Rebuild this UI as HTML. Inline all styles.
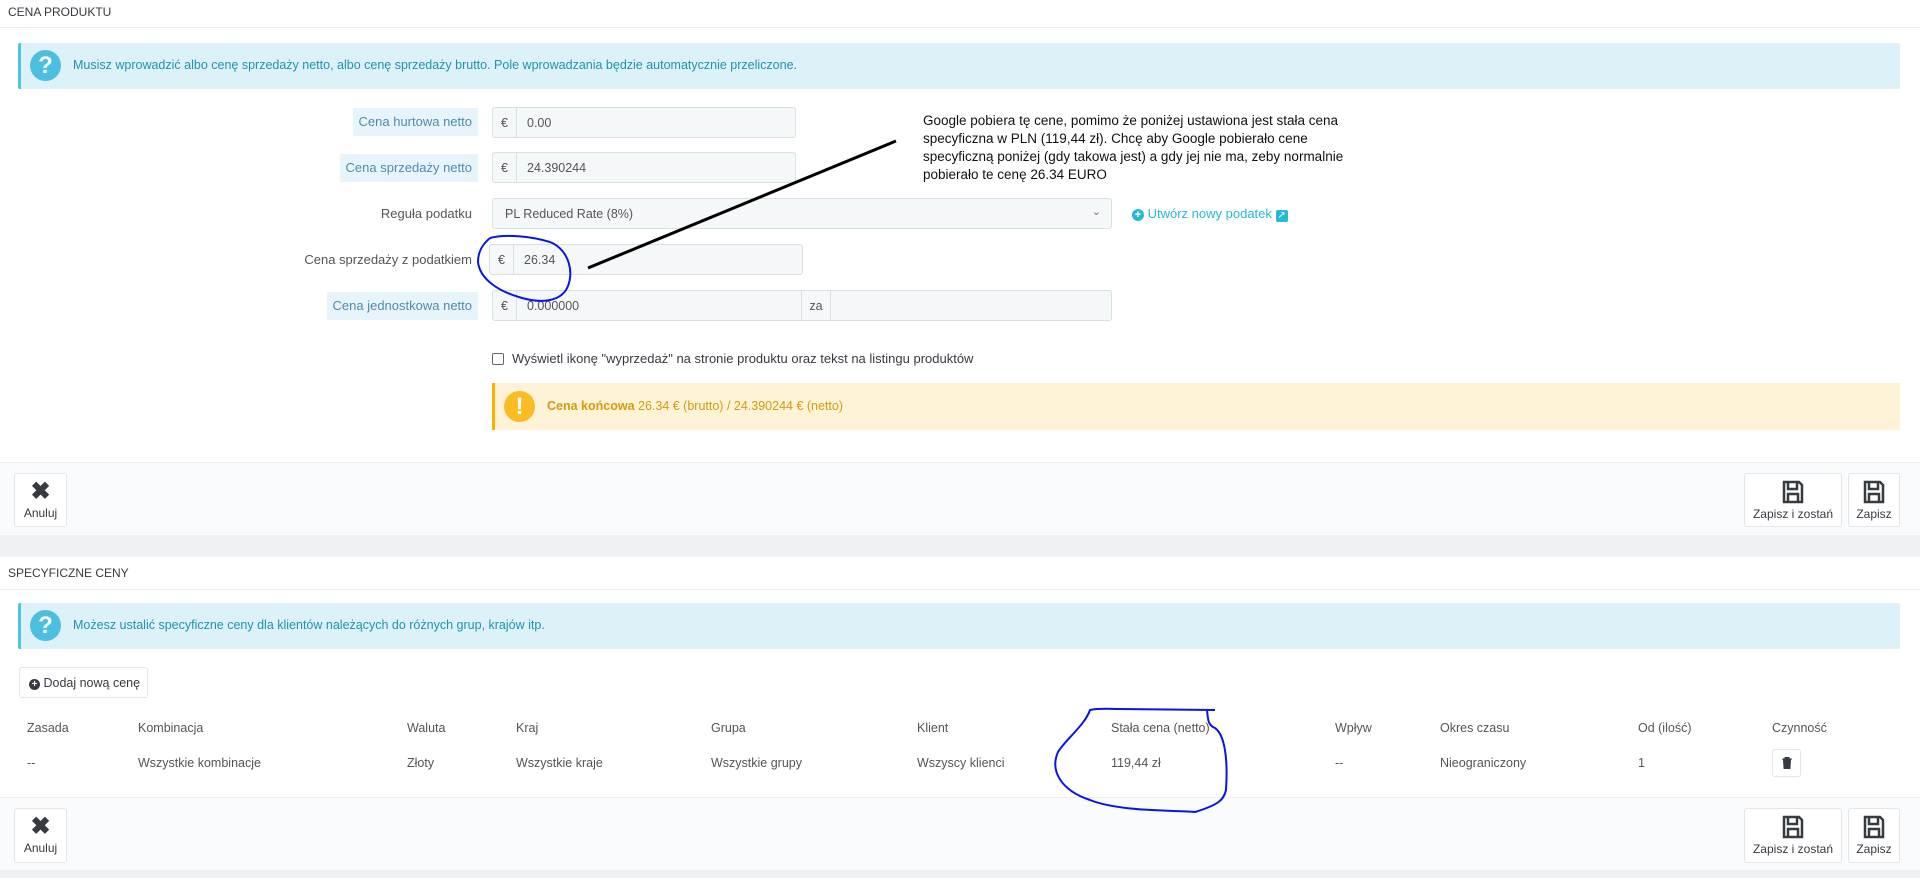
<!DOCTYPE html>
<html><head><meta charset="utf-8"><style>
*{box-sizing:border-box;margin:0;padding:0}
body{width:1920px;height:878px;position:relative;background:#eff1f2;font-family:"Liberation Sans",sans-serif;font-size:12.5px;color:#555;overflow:hidden}
.a{position:absolute}
.panel{position:absolute;left:0;width:1920px;background:#fff}
.hdr{font-size:12px;color:#363a41;text-transform:uppercase}
.alert{position:absolute;left:18px;width:1882px;height:46px;background:#dcf2f8;border-left:3px solid #4ac7e0;color:#1e94ab;font-size:12.5px;padding:15px 0 0 52px;border-radius:2px}
.qi{position:absolute;left:9px;top:7px;width:31px;height:31px;border-radius:50%;background:#4cbfe0;color:#fff;font-weight:bold;font-size:24px;text-align:center;line-height:31px}
.lbl{position:absolute;right:1442px;padding:0 6px;height:28px;line-height:28px;font-size:13px;color:#555}
.lbl.h{background:#e7f4fb;color:#4f8dab}
.inp{position:absolute;height:31px;background:#f5f8f9;border:1px solid #d8e0e3;border-radius:3px;font-size:12.5px;color:#555}
.inp .cur{position:absolute;left:0;top:0;width:24px;height:29px;border-right:1px solid #d8e0e3;text-align:center;line-height:31px}
.inp .v{position:absolute;left:34px;top:0;line-height:31px}
.foot{position:absolute;left:0;width:1920px;background:#fafbfc;border-top:1px solid #eee}
.btn{position:absolute;background:#fff;border:1px solid #e3e6e8;border-radius:3px;text-align:center;font-size:12px;color:#363a41}
.col{position:absolute;font-size:12.5px;color:#555}
</style></head><body>
<div class="panel" style="top:0;height:535px"></div>
<div class="a hdr" style="left:8px;top:5px">Cena produktu</div>
<div class="a" style="left:0;top:27px;width:1920px;height:1px;background:#eee"></div>
<div class="alert" style="top:43px"><div class="qi">?</div>Musisz wprowadzić albo cenę sprzedaży netto, albo cenę sprzedaży brutto. Pole wprowadzania będzie automatycznie przeliczone.</div>

<div class="lbl h" style="top:108px">Cena hurtowa netto</div>
<div class="inp" style="left:492px;top:107px;width:304px"><span class="cur">€</span><span class="v">0.00</span></div>
<div class="lbl h" style="top:154px">Cena sprzedaży netto</div>
<div class="inp" style="left:492px;top:152px;width:304px"><span class="cur">€</span><span class="v">24.390244</span></div>
<div class="lbl" style="top:200px">Reguła podatku</div>
<div class="inp" style="left:492px;top:198px;width:620px"><span class="v" style="left:12px">PL Reduced Rate (8%)</span><span class="a" style="right:10px;top:6px;font-size:11px;color:#777">&#8964;</span></div>
<div class="a" style="left:1132px;top:206px;color:#25b9d7;font-size:13px"><span style="display:inline-block;width:12px;height:12px;border-radius:50%;background:#25b9d7;color:#fff;font-size:11px;line-height:12px;text-align:center;font-weight:bold">+</span> Utwórz nowy podatek <span style="display:inline-block;width:12px;height:12px;background:#25b9d7;color:#fff;font-size:10px;line-height:12px;text-align:center;border-radius:2px">↗</span></div>
<div class="lbl" style="top:246px">Cena sprzedaży z podatkiem</div>
<div class="inp" style="left:489px;top:244px;width:314px"><span class="cur">€</span><span class="v">26.34</span></div>
<div class="lbl h" style="top:292px">Cena jednostkowa netto</div>
<div class="inp" style="left:492px;top:290px;width:620px"><span class="cur">€</span><span class="v">0.000000</span><span class="a" style="left:308px;top:0;width:30px;height:29px;border-left:1px solid #d8e0e3;border-right:1px solid #d8e0e3;text-align:center;line-height:31px">za</span></div>
<div class="a" style="left:492px;top:353px;width:12px;height:12px;border:1px solid #666;border-radius:2px;background:#fff"></div>
<div class="a" style="left:512px;top:351px;font-size:13px;color:#363a41">Wyświetl ikonę "wyprzedaż" na stronie produktu oraz tekst na listingu produktów</div>
<div class="a" style="left:492px;top:383px;width:1408px;height:47px;background:#fff3d7;border-left:3px solid #fab000;color:#d39b0e;font-size:12.5px;padding:16px 0 0 52px"><div class="qi" style="background:#fbbb22;left:9px;top:8px">!</div><b>Cena końcowa</b> 26.34 € (brutto) / 24.390244 € (netto)</div>

<div class="foot" style="top:462px;height:73px"></div>
<div class="btn" style="left:14px;top:473px;width:53px;height:54px"><div style="font-size:24px;font-weight:bold;color:#363a41;line-height:28px;margin-top:4px">✖</div>Anuluj</div>
<div class="btn" style="left:1744px;top:473px;width:98px;height:54px"><svg width="22" height="24" viewBox="0 0 22 24" style="margin-top:6px"><path d="M2 2h15l3 3v17H2z M6 2v7h9V2 M6 22v-8h10v8" fill="none" stroke="#363a41" stroke-width="2.5"/></svg><br>Zapisz i zostań</div>
<div class="btn" style="left:1848px;top:473px;width:52px;height:54px"><svg width="22" height="24" viewBox="0 0 22 24" style="margin-top:6px"><path d="M2 2h15l3 3v17H2z M6 2v7h9V2 M6 22v-8h10v8" fill="none" stroke="#363a41" stroke-width="2.5"/></svg><br>Zapisz</div>

<div class="panel" style="top:557px;height:313px"></div>
<div class="a hdr" style="left:8px;top:566px">Specyficzne ceny</div>
<div class="a" style="left:0;top:589px;width:1920px;height:1px;background:#eee"></div>
<div class="alert" style="top:603px"><div class="qi">?</div>Możesz ustalić specyficzne ceny dla klientów należących do różnych grup, krajów itp.</div>
<div class="btn" style="left:19px;top:667px;width:129px;height:31px;text-align:left;padding:8px 0 0 9px;font-size:12.5px"><span style="display:inline-block;width:11px;height:11px;border-radius:50%;background:#363a41;color:#fff;font-size:10px;line-height:11px;text-align:center;font-weight:bold">+</span> Dodaj nową cenę</div>
<div class="col" style="left:27px;top:721px">Zasada</div>
<div class="col" style="left:138px;top:721px">Kombinacja</div>
<div class="col" style="left:407px;top:721px">Waluta</div>
<div class="col" style="left:516px;top:721px">Kraj</div>
<div class="col" style="left:711px;top:721px">Grupa</div>
<div class="col" style="left:917px;top:721px">Klient</div>
<div class="col" style="left:1111px;top:721px">Stała cena (netto)</div>
<div class="col" style="left:1335px;top:721px">Wpływ</div>
<div class="col" style="left:1440px;top:721px">Okres czasu</div>
<div class="col" style="left:1638px;top:721px">Od (ilość)</div>
<div class="col" style="left:1772px;top:721px">Czynność</div>
<div class="col" style="left:27px;top:756px">--</div>
<div class="col" style="left:138px;top:756px">Wszystkie kombinacje</div>
<div class="col" style="left:407px;top:756px">Złoty</div>
<div class="col" style="left:516px;top:756px">Wszystkie kraje</div>
<div class="col" style="left:711px;top:756px">Wszystkie grupy</div>
<div class="col" style="left:917px;top:756px">Wszyscy klienci</div>
<div class="col" style="left:1111px;top:756px">119,44 zł</div>
<div class="col" style="left:1335px;top:756px">--</div>
<div class="col" style="left:1440px;top:756px">Nieograniczony</div>
<div class="col" style="left:1638px;top:756px">1</div>
<div class="btn" style="left:1772px;top:749px;width:29px;height:28px"><svg width="10" height="12" viewBox="0 0 10 12" style="margin-top:7px"><path d="M0 2h10M3 2V0h4v2M1.5 3h7l-.6 9h-5.8z" fill="#363a41" stroke="#363a41" stroke-width="1"/></svg></div>

<div class="foot" style="top:797px;height:73px"></div>
<div class="btn" style="left:14px;top:808px;width:53px;height:55px"><div style="font-size:24px;font-weight:bold;color:#363a41;line-height:28px;margin-top:4px">✖</div>Anuluj</div>
<div class="btn" style="left:1744px;top:808px;width:98px;height:55px"><svg width="22" height="24" viewBox="0 0 22 24" style="margin-top:6px"><path d="M2 2h15l3 3v17H2z M6 2v7h9V2 M6 22v-8h10v8" fill="none" stroke="#363a41" stroke-width="2.5"/></svg><br>Zapisz i zostań</div>
<div class="btn" style="left:1848px;top:808px;width:52px;height:55px"><svg width="22" height="24" viewBox="0 0 22 24" style="margin-top:6px"><path d="M2 2h15l3 3v17H2z M6 2v7h9V2 M6 22v-8h10v8" fill="none" stroke="#363a41" stroke-width="2.5"/></svg><br>Zapisz</div>

<div class="a" style="left:923px;top:112px;font-size:13.5px;line-height:18px;color:#111;white-space:nowrap">Google pobiera tę cene, pomimo że poniżej ustawiona jest stała cena<br>specyficzna w PLN (119,44 zł). Chcę aby Google pobierało cene<br>specyficzną poniżej (gdy takowa jest) a gdy jej nie ma, zeby normalnie<br>pobierało te cenę 26.34 EURO</div>
<svg class="a" style="left:0;top:0" width="1920" height="878">
<path d="M588 268 L896 141" stroke="#000" stroke-width="3"/>
<path d="M490 238 C505 234 530 236 550 242 C570 250 575 275 566 290 C558 302 540 303 522 298 C500 292 480 280 478 262 C478 250 484 243 490 238" fill="none" stroke="#0a14e6" stroke-width="2"/>
<path d="M1118 709 L1215 710 M1207 710 C1208 720 1208 725 1215 728 C1225 735 1228 760 1226 790 C1224 800 1218 805 1195 812 C1175 810 1120 812 1090 800 C1060 790 1050 770 1058 752 C1065 740 1085 725 1090 710 C1100 708 1110 709 1118 709" fill="none" stroke="#0a14e6" stroke-width="2"/>
</svg>
</body></html>
